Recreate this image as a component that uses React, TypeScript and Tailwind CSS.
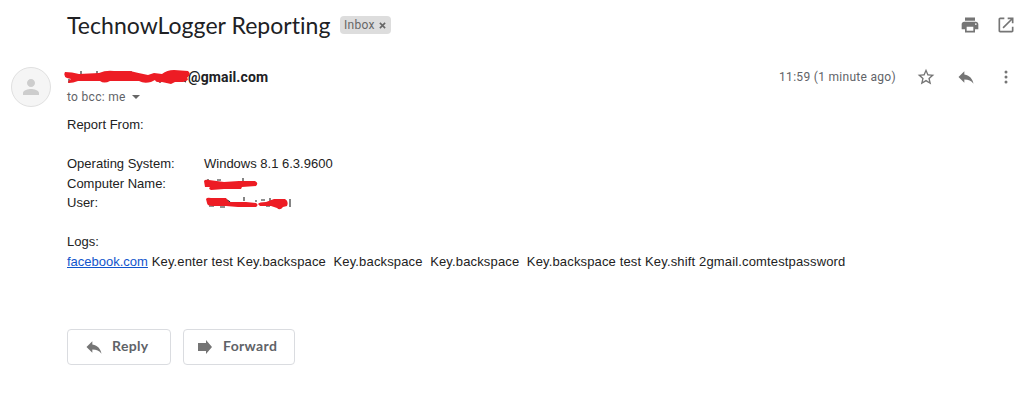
import type { ReactNode } from "react";

function Icon({ d, className = "size-5" }: { d: string; className?: string }) {
  return (
    <svg viewBox="0 0 24 24" className={`shrink-0 fill-[#757575] ${className}`}>
      <path d={d} />
    </svg>
  );
}

const PRINT =
  "M19 8H5c-1.66 0-3 1.34-3 3v6h4v4h12v-4h4v-6c0-1.66-1.34-3-3-3zm-3 11H8v-5h8v5zm3-7c-.55 0-1-.45-1-1s.45-1 1-1 1 .45 1 1-.45 1-1 1zm-1-9H6v4h12V3z";
const OPEN =
  "M19 19H5V5h5V3H5c-1.11 0-2 .9-2 2v14c0 1.1.89 2 2 2h14c1.1 0 2-.9 2-2v-5h-2v5zM14 3v2h3.59l-9.83 9.83 1.41 1.41L19 6.41V10h2V3h-7z";
const STAR =
  "M22 9.24l-7.19-.62L12 2 9.19 8.63 2 9.24l5.46 4.73L5.82 21 12 17.27 18.18 21l-1.63-7.03L22 9.24zM12 15.4l-3.76 2.27 1-4.28-3.32-2.88 4.38-.38L12 6.1l1.71 4.04 4.38.38-3.32 2.88 1 4.28L12 15.4z";
const REPLY = "M10 9V5l-7 7 7 7v-4.1c5 0 8.5 1.6 11 5.1-1-5-4-10-11-11z";
const MORE =
  "M12 7.8a1.8 1.8 0 1 0 0-3.6 1.8 1.8 0 0 0 0 3.6zm0 6a1.8 1.8 0 1 0 0-3.6 1.8 1.8 0 0 0 0 3.6zm0 6a1.8 1.8 0 1 0 0-3.6 1.8 1.8 0 0 0 0 3.6z";
const PERSON =
  "M12 12c2.21 0 4-1.79 4-4s-1.79-4-4-4-4 1.79-4 4 1.79 4 4 4zm0 2c-2.67 0-8 1.34-8 4v2h16v-2c0-2.66-5.33-4-8-4z";

function Scribble({
  width,
  height,
  marks,
  d,
  className,
}: {
  width: number;
  height: number;
  marks: string;
  d: string;
  className: string;
}) {
  return (
    <svg width={width} height={height} className={`shrink-0 ${className}`}>
      <path d={marks} fill="none" stroke="#222" strokeWidth="1.1" />
      <path d={d} fill="#ed1c24" />
    </svg>
  );
}

function Row({ label, children }: { label?: string; children?: ReactNode }) {
  return (
    <div className="flex h-[19.5px]">
      <div className="w-[137px] shrink-0">{label}</div>
      {children}
    </div>
  );
}

export default function App() {
  return (
    <main className="h-[403px] w-[1027px] overflow-hidden bg-white font-['Roboto',sans-serif] text-[#222]">
      <header className="flex h-[50px] items-center pl-[67px] pr-[11px]">
        <h1 className="w-[273px] whitespace-nowrap font-['Lato',sans-serif] text-[23px] leading-7 tracking-[0.04px] text-[#202124]">
          TechnowLogger Reporting
        </h1>
        <div className="flex h-[18px] w-[51px] items-center rounded bg-[#ddd] pl-1 text-[12px] text-[#666]">
          <span className="w-[35px] tracking-[0.3px]">Inbox</span>
          <svg viewBox="0 0 8 8" className="mt-px size-[7px] stroke-[#666]" strokeWidth="1.8">
            <path d="M1 1l6 6M7 1L1 7" />
          </svg>
        </div>
        <div className="ml-auto flex gap-4">
          <Icon d={PRINT} />
          <Icon d={OPEN} />
        </div>
      </header>

      <section className="flex pt-[17px]">
        <div className="ml-[11px] mr-4 flex size-10 shrink-0 items-center justify-center rounded-full border border-[#e0e0e0] bg-[#f5f5f5]">
          <svg viewBox="0 0 24 24" className="size-6 fill-[#cdcdcd]">
            <path d={PERSON} />
          </svg>
        </div>
        <div className="flex-1">
          <div className="flex h-5 items-center pr-[11px]">
            <Scribble
              className="-ml-[3px] -mr-0.5"
              width={126}
              height={16}
              marks="M5 10v4M17 2v3M33 2v3M62 2v3M67 2v3M96 12v2M118 11l4 2"
              d="M1 3Q-1 7 3 9L7 10Q2 13 5 14Q9 14 14 12L36 12Q40 15 46 12L75 12Q80 15 87 13L91 11Q92 14 98 13L107 15L111 13L119 13Q126 11 123 9Q128 5 124 2L110 1Q103 1 98 5L90 4L84 6Q74 4 66 2L50 2Q42 1 35 4L15 5Q8 3 1 3Z"
            />
            <span className="text-[14px] font-bold tracking-[0.13px] text-[#202124]">@gmail.com</span>
            <span className="ml-auto mr-[20px] text-[12px] tracking-[0.3px] text-[#5f6368]">11:59 (1 minute ago)</span>
            <div className="flex gap-5">
              <Icon d={STAR} />
              <Icon d={REPLY} />
              <Icon d={MORE} />
            </div>
          </div>
          <div className="flex h-5 items-center gap-[6px] text-[12px] tracking-[0.3px] text-[#5f6368]">
            <span>to bcc: me</span>
            <svg viewBox="0 0 8 4" className="h-1 w-2 fill-[#666]">
              <path d="M0 0h8L4 4z" />
            </svg>
          </div>
        </div>
      </section>

      <article className="pl-[67px] pt-2 font-['Liberation_Sans',sans-serif] text-[13px] leading-[19.5px]">
        <Row label="Report From:" />
        <Row />
        <Row label="Operating System:">
          <span>Windows 8.1 6.3.9600</span>
        </Row>
        <Row label="Computer Name:">
          <Scribble
            className="mt-1"
            width={56}
            height={13}
            marks="M4 1v3M13 2h4M39 0v4"
            d="M0 3Q1 1 5 2L20 4L35 3L51 3Q55 5 52 8L38 9L37 11L20 11L7 12Q4 11 6 9L1 9Z"
          />
        </Row>
        <Row label="User:">
          <Scribble
            className="ml-0.5 mt-[2px]"
            width={90}
            height={15}
            marks="M3 11h5M14 12h5M21 5l3 2M38 2v4M49 6h2M55 5h4M64 3v3M84 4v8M60 11h4"
            d="M0 4Q1 2 5 3L20 3L23 7L40 7L50 8Q53 10 50 12L32 12L20 11L7 11Q1 11 1 8ZM52 9Q53 7 60 7L68 4L79 4Q83 6 81 11L77 12Q74 16 71 13L65 11L54 11Z"
          />
        </Row>
        <Row />
        <Row label="Logs:" />
        <p className="whitespace-pre tracking-[0.15px]">
          <a className="tracking-normal text-[#15c] underline">facebook.com</a>
          {" Key.enter test Key.backspace  Key.backspace  Key.backspace  Key.backspace test Key.shift 2gmail.comtestpassword"}
        </p>
      </article>

      <footer className="flex gap-3 pl-[67px] pt-[58px] font-['Lato',sans-serif] text-[14px] font-bold tracking-[0.35px] text-[#5f6368]">
        <button className="flex h-9 w-[104px] items-center rounded border border-[#dadce0] pl-4">
          <Icon d={REPLY} />
          <span className="-mt-[3px] ml-2">Reply</span>
        </button>
        <button className="flex h-9 w-[112px] items-center rounded border border-[#dadce0] pl-[14px]">
          <svg viewBox="0 0 14 14" className="size-[14px] fill-[#757575]">
            <path d="M0 3h8V0l6 7-6 7v-3H0z" />
          </svg>
          <span className="-mt-[3px] ml-[11px]">Forward</span>
        </button>
      </footer>
    </main>
  );
}
